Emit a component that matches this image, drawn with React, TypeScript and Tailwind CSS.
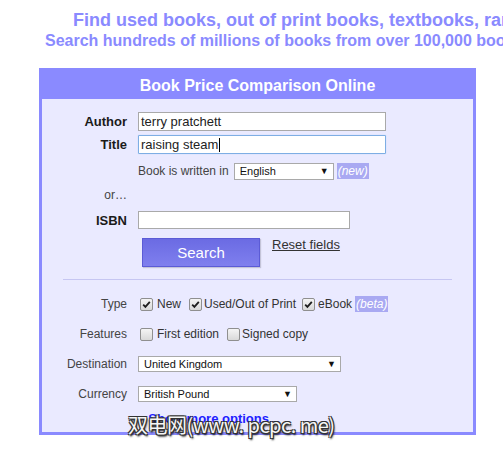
import { FC, ReactNode } from "react";

const Check: FC<{ checked?: boolean }> = ({ checked }) => (
  <span className="inline-flex h-[13px] w-[13px] shrink-0 items-center justify-center rounded-[2px] border border-[#8f8f8f] bg-gradient-to-b from-[#f4f4f4] to-[#d9d9d9]">
    {checked && (
      <svg width="11" height="11" viewBox="0 0 11 11">
        <path d="M2.2 5.6 L4.4 7.9 L8.8 2.8" fill="none" stroke="#1e1e1e" strokeWidth="1.8" />
      </svg>
    )}
  </span>
);

const Row: FC<{ label: ReactNode; bold?: boolean; className?: string; children?: ReactNode }> = ({
  label,
  bold,
  className,
  children,
}) => (
  <div className={`flex items-center ${className ?? ""}`}>
    <div
      className={
        bold
          ? "w-[85px] shrink-0 text-right text-[13px] font-bold leading-[15px] text-[#1a1a1a]"
          : "w-[85px] shrink-0 text-right text-[12px] leading-[14px] text-[#444]"
      }
    >
      {label}
    </div>
    <div className="ml-[11px] flex h-full items-center">{children}</div>
  </div>
);

export default function App() {
  return (
    <div className="relative h-[451px] w-[503px] overflow-hidden bg-white font-['Liberation_Sans',Arial,sans-serif]">
      <div className="whitespace-nowrap pt-[10px] font-bold text-[#8a8aff]">
        <div className="pl-[73px] text-[18px] leading-[21px]">
          Find used books, out of print books, textbooks, rare books
        </div>
        <div className="pl-[45px] text-[16px] leading-[20px]">
          Search hundreds of millions of books from over 100,000 bookstores
        </div>
      </div>

      <div className="ml-[39px] mt-[17px] w-[437px] border-[3px] border-[#8a8aff] bg-[#eaeaff]">
        <div className="-mx-px bg-[#8a8aff] pt-px text-center text-[16px] font-bold leading-[27px] text-white">
          Book Price Comparison Online
        </div>

        <div className="pb-[6px] pt-[13px]">
          <Row label="Author" bold className="h-[19px]">
            <div className="h-[19px] w-[248px] border border-[#a9a9a9] bg-white pl-[2px] text-[13px] leading-[17px] text-[#222]">
              terry pratchett
            </div>
          </Row>
          <Row label="Title" bold className="mt-[4px] h-[19px]">
            <div className="flex h-[19px] w-[248px] items-center rounded-[1px] border border-[#7eaee4] bg-white pl-[2px] text-[13px] leading-[17px] text-[#222] shadow-[0_0_1px_#9cc4f0]">
              raising steam
              <span className="ml-px h-[14px] w-px bg-black" />
            </div>
          </Row>
          <Row label="" className="mt-[9px] h-[16px]">
            <span className="text-[12px] leading-[14px] text-[#444]">Book is written in</span>
            <div className="ml-[5px] flex h-[17px] w-[100px] items-center justify-between border border-[#a9a9a9] bg-white pl-[5px] pr-[4px] text-[11px] leading-[13px] text-[#111]">
              <span>English</span>
              <span className="text-[9px]">▼</span>
            </div>
            <span className="ml-[3px] bg-[#a9a9f2] px-px text-[12px] italic leading-[16px] text-white">(new)</span>
          </Row>
          <Row label="or…" className="mt-[8px] h-[16px]" />
          <Row label="ISBN" bold className="mt-[8px] h-[18px]">
            <div className="h-[18px] w-[212px] border border-[#a9a9a9] bg-white" />
          </Row>
          <Row label="" className="mt-[9px] h-[29px] !items-start">
            <div className="flex items-start">
              <button
                type="button"
                className="ml-[4px] h-[29px] w-[118px] border border-[#5b5bd6] bg-gradient-to-b from-[#6b6be3] to-[#7f7fee] text-[15px] leading-[17px] text-white shadow-[1px_1px_1px_#c4c4d8]"
              >
                Search
              </button>
              <span className="ml-[12px] mt-[-1px] text-[13px] leading-[15px] text-[#333] underline">
                Reset fields
              </span>
            </div>
          </Row>

          <div className="mx-[21px] mt-[12px] h-px bg-[#c6c6f2]" />

          <Row label="Type" className="mt-[16px] h-[16px]">
            <span className="ml-[2px] flex items-center text-[12px] leading-[14px] text-[#333]">
              <Check checked />
              <span className="ml-[4px]">New</span>
              <span className="ml-[8px] flex">
                <Check checked />
              </span>
              <span className="ml-[2px]">Used/Out of Print</span>
              <span className="ml-[6px] flex">
                <Check checked />
              </span>
              <span className="ml-[3px]">eBook</span>
              <span className="ml-[3px] bg-[#a9a9f2] px-px italic leading-[16px] text-white">(beta)</span>
            </span>
          </Row>
          <Row label="Features" className="mt-[14px] h-[16px]">
            <span className="ml-[2px] flex items-center text-[12px] leading-[14px] text-[#333]">
              <Check />
              <span className="ml-[4px]">First edition</span>
              <span className="ml-[8px] flex">
                <Check />
              </span>
              <span className="ml-[2px]">Signed copy</span>
            </span>
          </Row>
          <Row label="Destination" className="mt-[14px] h-[16px]">
            <div className="flex h-[16px] w-[203px] items-center justify-between border border-[#a9a9a9] bg-white pl-[5px] pr-[4px] text-[11px] leading-[13px] text-[#111]">
              <span>United Kingdom</span>
              <span className="text-[9px]">▼</span>
            </div>
          </Row>
          <Row label="Currency" className="mt-[14px] h-[16px]">
            <div className="flex h-[16px] w-[159px] items-center justify-between border border-[#a9a9a9] bg-white pl-[5px] pr-[4px] text-[11px] leading-[13px] text-[#111]">
              <span>British Pound</span>
              <span className="text-[9px]">▼</span>
            </div>
          </Row>
          <Row label="" className="mt-[8px] h-[16px]">
            <span className="text-[13px] font-bold leading-[15px] text-[#2020ff]">
              <span className="mr-[6px]">›</span>Show more options...
            </span>
          </Row>
        </div>
      </div>

      <div className="absolute left-[128px] top-[412px] whitespace-nowrap font-['Noto_Sans_CJK_SC',sans-serif] text-[20px] leading-[26px] tracking-[-0.5px] text-[#f6f6f6] [text-shadow:1px_1px_0_#333,-1px_-1px_0_#333,1px_-1px_0_#333,-1px_1px_0_#333,1px_2px_2px_#000]">
        双电网(www. pcpc. me)
      </div>
    </div>
  );
}
